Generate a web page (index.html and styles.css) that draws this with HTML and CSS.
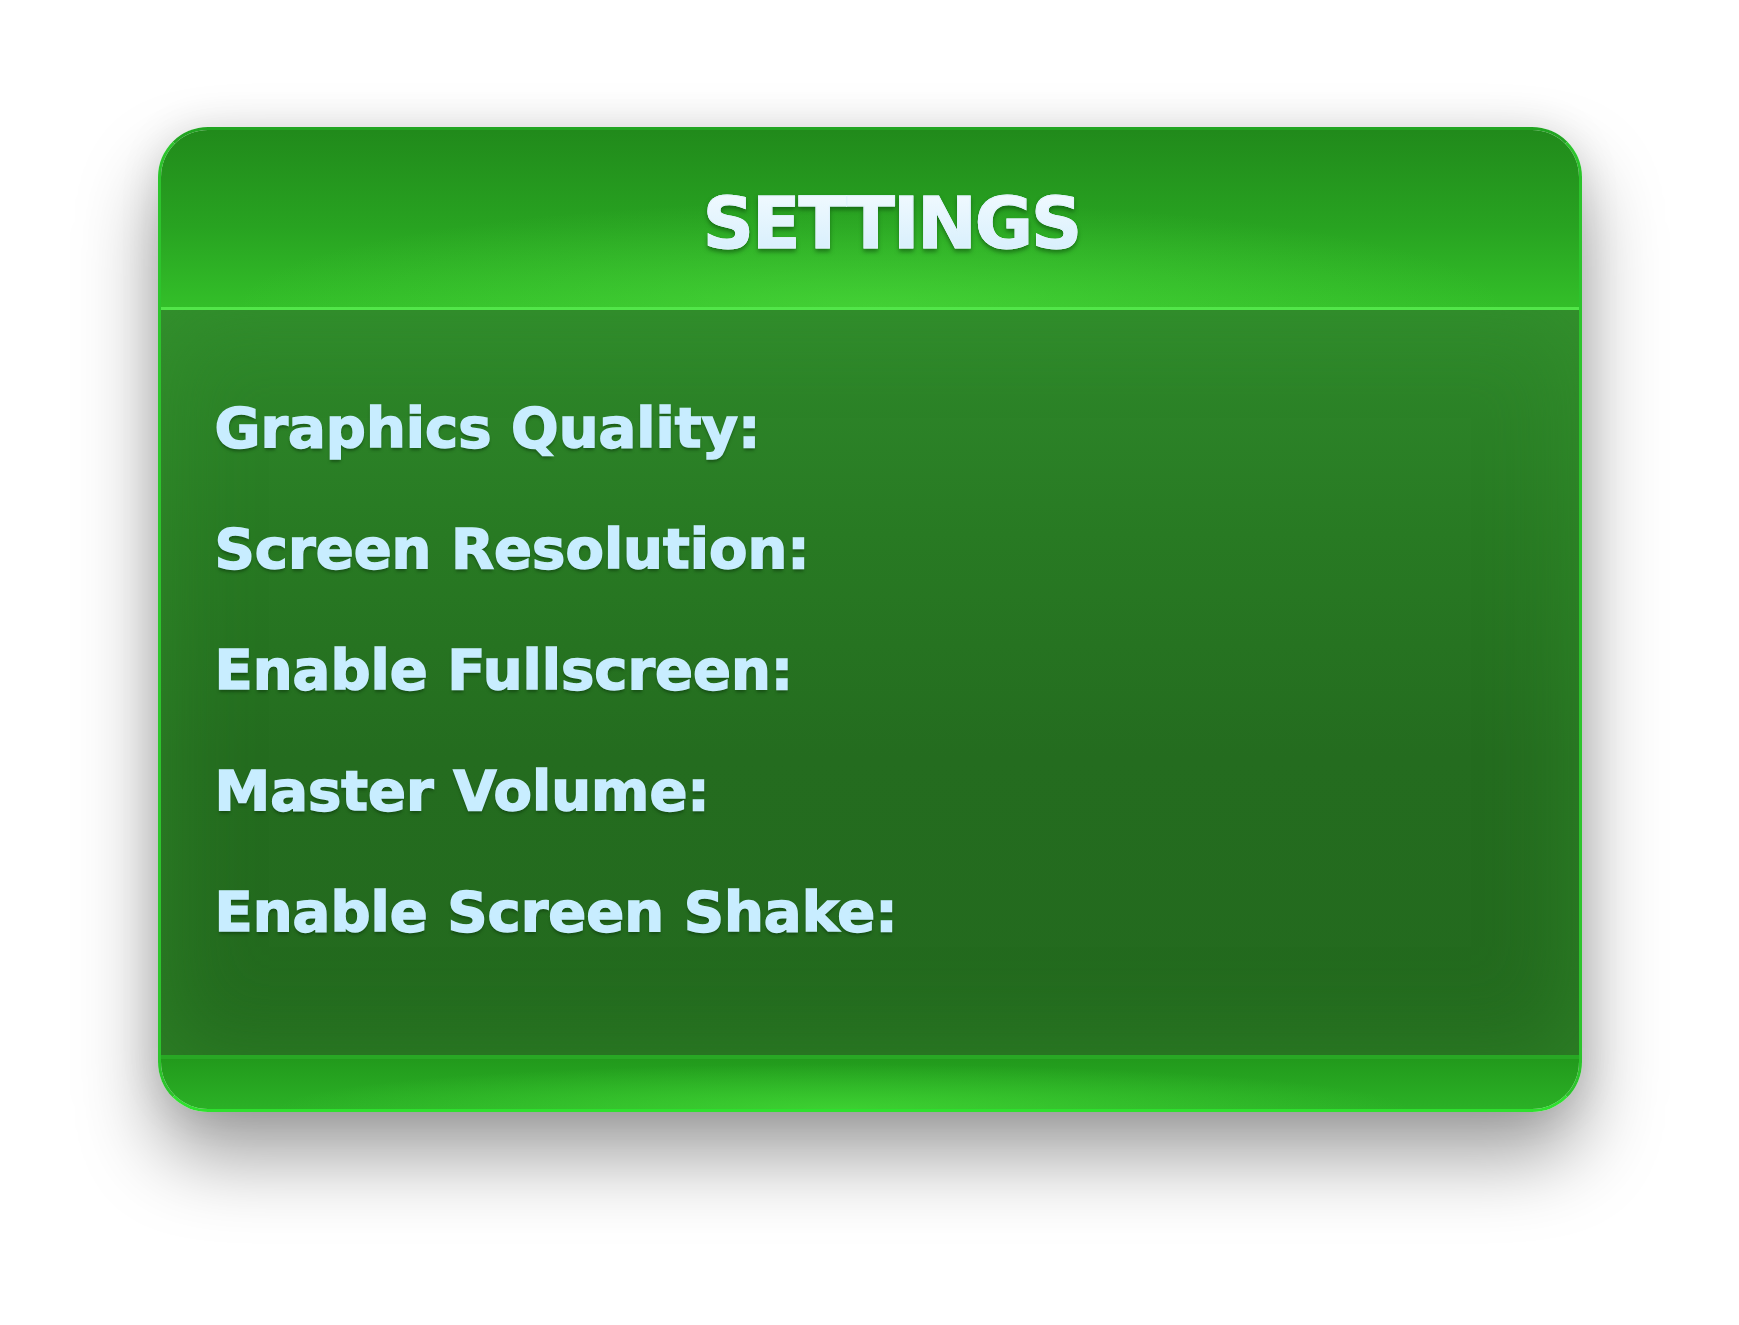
FILE: index.html
```html
<!DOCTYPE html>
<html lang="en">
<head>
<meta charset="UTF-8">
<meta name="viewport" content="width=device-width, initial-scale=1.0">
<title>Settings</title>
<link rel="stylesheet" href="styles.css">
</head>
<body>
<div class="settings-card">
    <header class="settings-header">
        <h1>SETTINGS</h1>
    </header>
    <div class="settings-body">
        <div class="setting-row">Graphics Quality:</div>
        <div class="setting-row">Screen Resolution:</div>
        <div class="setting-row">Enable Fullscreen:</div>
        <div class="setting-row">Master Volume:</div>
        <div class="setting-row">Enable Screen Shake:</div>
    </div>
    <footer class="settings-footer"></footer>
</div>
</body>
</html>
```

FILE: styles.css
```css
html, body {
    margin: 0;
    padding: 0;
    width: 100%;
    height: 100%;
    background-color: #fff;
    font-family: "DejaVu Sans", "Noto Sans", sans-serif;
}
.settings-card {
    box-sizing: border-box;
    width: 1424px;
    height: 985px;
    margin: 127px auto 0;
    border: 3px solid #2cc42c;
    border-top-color: #22a522;
    border-bottom-color: #2ee02e;
    border-radius: 50px;
    overflow: hidden;
    display: flex;
    flex-direction: column;
    box-shadow: 0 44px 80px rgba(0, 0, 0, 0.38), 0 0 40px rgba(0, 0, 0, 0.1);
}
.settings-header {
    box-sizing: border-box;
    height: 180px;
    padding: 53px 0 0 44px;
    text-align: center;
    border-bottom: 3px solid #52e649;
    background:
        radial-gradient(ellipse 45% 60% at 50% 100%, rgba(90, 235, 70, 0.4), rgba(90, 235, 70, 0)),
        linear-gradient(180deg, #218a1b 0%, #28a321 55%, #33bf29 100%);
}
.settings-header h1 {
    display: inline-block;
    margin: 0;
    font-size: 71px;
    font-weight: bold;
    letter-spacing: -2px;
    line-height: 1.164;
    color: transparent;
    background: linear-gradient(180deg, #f4fbff 0%, #d2edfc 100%);
    -webkit-background-clip: text;
    background-clip: text;
    -webkit-text-stroke: 1px #e2f3fe;
    filter: drop-shadow(0 3px 2px rgba(10, 70, 10, 0.55));
}
.settings-body {
    box-sizing: border-box;
    height: 745px;
    padding: 57px 0 0 54px;
    background: linear-gradient(180deg, #2f8a2b 0%, #287a23 30%, #246c1f 60%, #236a1e 100%);
    box-shadow: inset 0 0 90px rgba(55, 150, 45, 0.55);
}
.setting-row {
    font-size: 56px;
    font-weight: bold;
    line-height: 121px;
    color: #c8edff;
    -webkit-text-stroke: 1.5px #c8edff;
    text-shadow: 0 3px 3px rgba(10, 50, 10, 0.5);
}
.settings-footer {
    flex: 1;
    border-top: 4px solid #28a824;
    background:
        radial-gradient(ellipse 40% 90% at 48% 100%, rgba(70, 225, 55, 0.65), rgba(70, 225, 55, 0)),
        linear-gradient(180deg, #229a1c 0%, #2bb126 100%);
}
```
